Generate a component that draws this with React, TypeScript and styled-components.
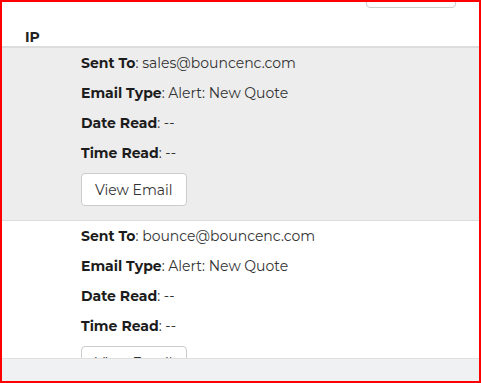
import React from "react";
import styled, { createGlobalStyle } from "styled-components";

const Global = createGlobalStyle`
  html, body { margin: 0; padding: 0; background: #fff; }
  body { font-family: Montserrat, "Open Sans", "DejaVu Sans", sans-serif; }
  * { box-sizing: border-box; }
`;

const Frame = styled.div`
  position: relative;
  width: 481px;
  height: 383px;
  border: 2px solid #ff0000;
  overflow: hidden;
  background: #fff;
`;

const Toolbar = styled.div`
  display: flex;
  justify-content: flex-end;
  padding-right: 23px;
  margin-top: -28px;
`;

const ToolButton = styled.button`
  width: 90px;
  height: 34px;
  border: 1px solid #ccc;
  border-radius: 4px;
  background: #fff;
`;

const Header = styled.div`
  height: 40px;
  padding: 19px 0 0 23px;
  border-bottom: 2px solid #dcdcdc;
  font-size: 14px;
  font-weight: 700;
  color: #222;
  line-height: 20px;
`;

const Row = styled.div<{ $shade?: boolean }>`
  display: flex;
  flex-direction: column;
  align-items: flex-start;
  padding: 5px 0 4px 79px;
  background: ${(p) => (p.$shade ? "#ededed" : "#fff")};
  border-bottom: 1px solid #dcdcdc;
`;

const Line = styled.p`
  margin: 0 0 10px;
  font-size: 14px;
  line-height: 20px;
  color: #333;
`;

const Label = styled.span`
  font-weight: 700;
  color: #1c1c1c;
`;

const ViewButton = styled.button`
  height: 33px;
  padding: 0 13px;
  margin-bottom: 10px;
  border: 1px solid #ccc;
  border-radius: 4px;
  background: #fff;
  font-family: inherit;
  font-size: 14px;
  color: #333;
`;

const Footer = styled.div`
  position: absolute;
  left: 0;
  right: 0;
  bottom: 0;
  height: 23px;
  background: #f0f1f3;
  border-top: 1px solid #e0e0e0;
`;

const rows = [
  { to: "sales@bouncenc.com", type: "Alert: New Quote", shade: true },
  { to: "bounce@bouncenc.com", type: "Alert: New Quote", shade: false },
];

export default function App() {
  return (
    <>
      <Global />
      <Frame>
        <Toolbar>
          <ToolButton />
        </Toolbar>
        <Header>IP</Header>
        {rows.map((r) => (
          <Row key={r.to} $shade={r.shade}>
            <Line>
              <Label>Sent To</Label>: {r.to}
            </Line>
            <Line>
              <Label>Email Type</Label>: {r.type}
            </Line>
            <Line>
              <Label>Date Read</Label>: --
            </Line>
            <Line>
              <Label>Time Read</Label>: --
            </Line>
            <ViewButton>View Email</ViewButton>
          </Row>
        ))}
        <Footer />
      </Frame>
    </>
  );
}
